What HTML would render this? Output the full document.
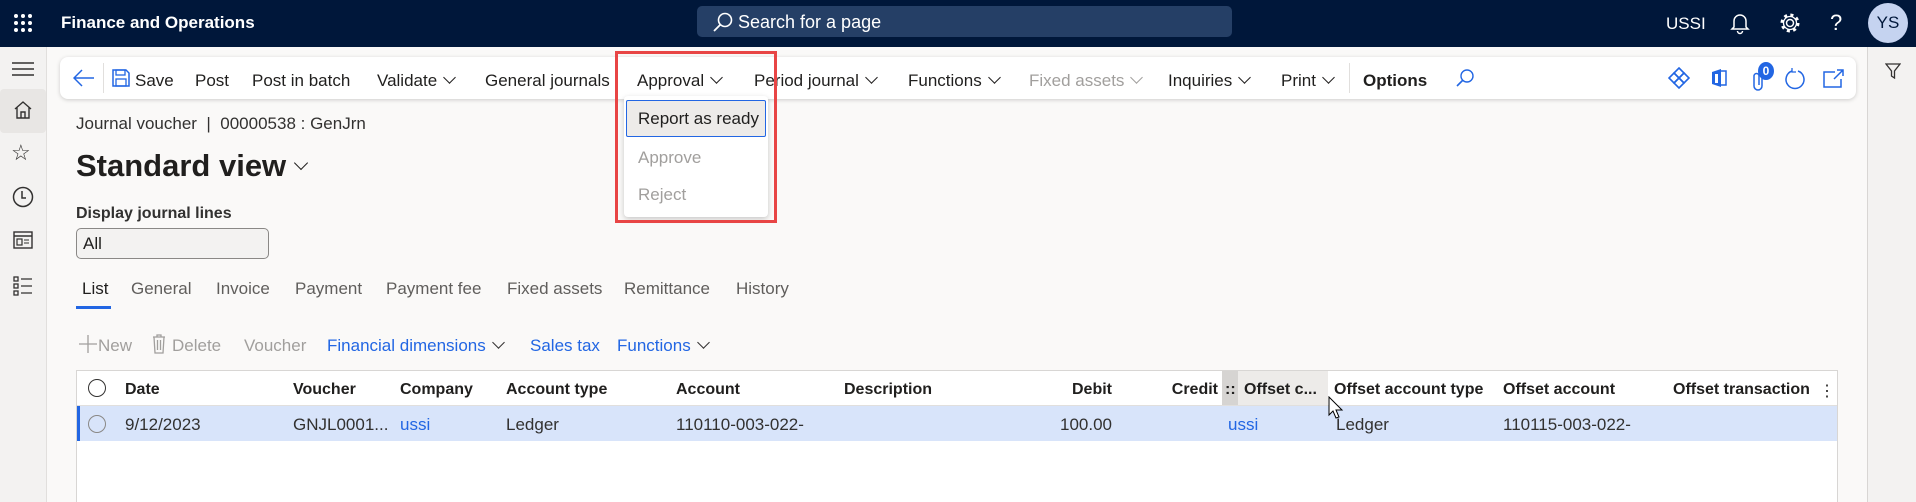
<!DOCTYPE html>
<html style="width:1916px;height:502px;overflow:hidden"><head><meta charset="utf-8"><style>
*{box-sizing:border-box;margin:0;padding:0}
body{width:1916px;height:502px;overflow:hidden;background:#faf9f8;font-family:"Liberation Sans",sans-serif;color:#201f1e;position:relative;font-size:17px}
.a{position:absolute;white-space:nowrap}
.top{position:absolute;left:0;top:0;width:1916px;height:47px;background:#00173a;color:#fff}
.side{position:absolute;left:0;top:47px;width:47px;height:455px;background:#f3f2f1;border-right:1px solid #e1dfdd}
.rside{position:absolute;left:1867px;top:47px;width:49px;height:455px;background:#f3f2f1;border-left:1px solid #d8d6d4}
.tb{position:absolute;left:60px;top:57px;width:1796px;height:42px;background:#fff;border-radius:8px;box-shadow:0 1px 4px rgba(0,0,0,.18)}
.ti{position:absolute;top:71px;font-size:17px;color:#201f1e}
.chev{display:inline-block;width:9px;height:9px;border-right:1.5px solid currentColor;border-bottom:1.5px solid currentColor;transform:rotate(45deg);margin-left:8px;position:relative;top:-4px}
.hd{position:absolute;top:381px;font-size:16px;font-weight:bold;color:#201f1e}
.cd{position:absolute;top:415px;font-size:17px;color:#323130}
.tab{position:absolute;top:279px;font-size:17px;color:#605e5c}
</style></head><body>
<div class="top">
 <svg class="a" style="left:13px;top:13px" width="20" height="20"><g fill="#fff"><circle cx="3" cy="3" r="2"/><circle cx="10" cy="3" r="2"/><circle cx="17" cy="3" r="2"/><circle cx="3" cy="10" r="2"/><circle cx="10" cy="10" r="2"/><circle cx="17" cy="10" r="2"/><circle cx="3" cy="17" r="2"/><circle cx="10" cy="17" r="2"/><circle cx="17" cy="17" r="2"/></g></svg>
 <div class="a" style="left:61px;top:13px;font-size:17px;font-weight:bold">Finance and Operations</div>
 <div class="a" style="left:697px;top:6px;width:535px;height:31px;background:#253f66;border-radius:5px"></div>
 <svg class="a" style="left:712px;top:11px" width="22" height="22"><circle cx="13" cy="9" r="6.5" fill="none" stroke="#fff" stroke-width="1.6"/><line x1="8.5" y1="13.5" x2="2" y2="20" stroke="#fff" stroke-width="1.8"/></svg>
 <div class="a" style="left:738px;top:12px;font-size:18px">Search for a page</div>
 <div class="a" style="left:1666px;top:14px;font-size:17px">USSI</div>
 <svg class="a" style="left:1729px;top:11px" width="22" height="24"><path d="M5 16V10a6 6 0 0 1 12 0v6l2 2H3z" fill="none" stroke="#fff" stroke-width="1.5"/><path d="M8.5 20a2.5 2.5 0 0 0 5 0" fill="none" stroke="#fff" stroke-width="1.5"/></svg>
 <svg class="a" style="left:1778px;top:11px" width="24" height="24"><circle cx="12" cy="12" r="3.5" fill="none" stroke="#fff" stroke-width="1.5"/><circle cx="12" cy="12" r="8" fill="none" stroke="#fff" stroke-width="3" stroke-dasharray="3 3.3"/><circle cx="12" cy="12" r="6.5" fill="none" stroke="#fff" stroke-width="1.3"/></svg>
 <div class="a" style="left:1830px;top:10px;font-size:22px">?</div>
 <div class="a" style="left:1868px;top:3px;width:40px;height:40px;border-radius:50%;background:#c5d3f0;color:#00173a;font-size:17px;text-align:center;line-height:40px">YS</div>
</div>
<div class="side">
 <svg class="a" style="left:12px;top:14px" width="22" height="16"><g stroke="#323130" stroke-width="1.5"><line x1="0" y1="2" x2="22" y2="2"/><line x1="0" y1="8" x2="22" y2="8"/><line x1="0" y1="14" x2="22" y2="14"/></g></svg>
 <div class="a" style="left:0;top:42px;width:46px;height:44px;background:#e8e6e4;border-radius:4px"></div>
 <svg class="a" style="left:13px;top:53px" width="20" height="20"><path d="M2 9L10 2l8 7M4 7v11h12V7M8 18v-6h4v6" fill="none" stroke="#323130" stroke-width="1.4"/></svg>
 <div class="a" style="left:11px;top:93px;font-size:22px;color:#323130">☆</div>
 <svg class="a" style="left:12px;top:139px" width="22" height="22"><circle cx="11" cy="11" r="9.5" fill="none" stroke="#323130" stroke-width="1.5"/><path d="M10 5v7h4" fill="none" stroke="#323130" stroke-width="1.5"/></svg>
 <svg class="a" style="left:13px;top:184px" width="20" height="18"><rect x="1" y="1" width="18" height="16" fill="none" stroke="#323130" stroke-width="1.4"/><line x1="1" y1="5" x2="19" y2="5" stroke="#323130" stroke-width="1.4"/><rect x="4" y="8" width="5" height="6" fill="none" stroke="#323130" stroke-width="1.2"/><path d="M11 9h5M11 12h5" stroke="#323130"/></svg>
 <svg class="a" style="left:13px;top:229px" width="20" height="20"><g fill="none" stroke="#323130" stroke-width="1.3"><rect x="1" y="1" width="4" height="4"/><rect x="1" y="8" width="4" height="4"/><rect x="1" y="15" width="4" height="4"/><path d="M8 3h11M8 10h11M8 17h11"/></g></svg>
</div>
<div class="rside"><svg class="a" style="left:17px;top:16px" width="16" height="16"><path d="M1 1h14L9.5 8v7L6.5 13V8z" fill="none" stroke="#323130" stroke-width="1.3"/></svg></div>

<div class="tb"></div>
<svg class="a" style="left:73px;top:69px" width="22" height="18"><path d="M21 9H2M9 1L1 9l8 8" fill="none" stroke="#2266e3" stroke-width="1.5"/></svg>
<div class="a" style="left:103px;top:63px;width:1px;height:30px;background:#e1dfdd"></div>
<svg class="a" style="left:112px;top:69px" width="18" height="18"><path d="M1 1h13l3 3v13H1z" fill="none" stroke="#2266e3" stroke-width="1.5"/><rect x="4" y="1" width="9" height="5" fill="none" stroke="#2266e3" stroke-width="1.3"/><rect x="4" y="10" width="10" height="7" fill="none" stroke="#2266e3" stroke-width="1.3"/></svg>
<div class="ti" style="left:135px">Save</div>
<div class="ti" style="left:195px">Post</div>
<div class="ti" style="left:252px">Post in batch</div>
<div class="ti" style="left:377px">Validate<span class="chev"></span></div>
<div class="ti" style="left:485px">General journals</div>
<div class="ti" style="left:637px">Approval<span class="chev"></span></div>
<div class="ti" style="left:754px">Period journal<span class="chev"></span></div>
<div class="ti" style="left:908px">Functions<span class="chev"></span></div>
<div class="ti" style="left:1029px;color:#a19f9d">Fixed assets<span class="chev"></span></div>
<div class="ti" style="left:1168px">Inquiries<span class="chev"></span></div>
<div class="ti" style="left:1281px">Print<span class="chev"></span></div>
<div class="a" style="left:1349px;top:63px;width:1px;height:30px;background:#e1dfdd"></div>
<div class="ti" style="left:1363px;font-weight:bold">Options</div>
<svg class="a" style="left:1455px;top:68px" width="20" height="20"><circle cx="12" cy="8" r="6" fill="none" stroke="#2266e3" stroke-width="1.4"/><line x1="8" y1="12" x2="2" y2="18" stroke="#2266e3" stroke-width="1.6"/></svg>
<svg class="a" style="left:1668px;top:67px" width="22" height="22"><g fill="none" stroke="#2266e3" stroke-width="1.6"><path d="M11 1l5 5-5 5-5-5z"/><path d="M6 6l5 5-5 5-5-5z"/><path d="M16 6l5 5-5 5-5-5z"/><path d="M11 11l5 5-5 5-5-5z"/></g></svg>
<svg class="a" style="left:1711px;top:68px" width="16" height="20"><path d="M1 4l9-3v18l-9-3z" fill="#2266e3"/><path d="M10 3h5v14h-5" fill="none" stroke="#2266e3" stroke-width="1.5"/><rect x="4" y="6" width="3" height="9" fill="#fff"/></svg>
<svg class="a" style="left:1752px;top:71px" width="14" height="22"><path d="M10 5v10a4 4 0 0 1-8 0V5a2.5 2.5 0 0 1 5 0v9" fill="none" stroke="#2266e3" stroke-width="1.5"/></svg>
<div class="a" style="left:1758px;top:62px;width:16px;height:18px;border-radius:50%;background:#2266e3;color:#fff;font-size:12px;font-weight:bold;text-align:center;line-height:18px">0</div>
<svg class="a" style="left:1784px;top:68px" width="22" height="22"><path d="M14 3a9 9 0 1 1-6 0" fill="none" stroke="#2266e3" stroke-width="1.5"/><path d="M8 0v4h4" fill="none" stroke="#2266e3" stroke-width="1.3"/></svg>
<svg class="a" style="left:1823px;top:69px" width="22" height="20"><path d="M12 3H1v15h17v-8" fill="none" stroke="#2266e3" stroke-width="1.5"/><path d="M11 10l9-9M14 1h6v6" fill="none" stroke="#2266e3" stroke-width="1.5"/></svg>

<div class="a" style="left:624px;top:96px;width:144px;height:121px;background:#fff;border-radius:4px;box-shadow:0 2px 6px rgba(0,0,0,.2)"></div>
<div class="a" style="left:626px;top:100px;width:140px;height:37px;background:#edebe9;border:1px solid #2266e3;border-radius:2px"></div>
<div class="a" style="left:638px;top:109px;font-size:17px">Report as ready</div>
<div class="a" style="left:638px;top:148px;font-size:17px;color:#a19f9d">Approve</div>
<div class="a" style="left:638px;top:185px;font-size:17px;color:#a19f9d">Reject</div>
<div class="a" style="left:615px;top:51px;width:162px;height:172px;border:3px solid #e84545"></div>

<div class="a" style="left:76px;top:114px;font-size:17px;color:#323130">Journal voucher &nbsp;| &nbsp;00000538 : GenJrn</div>
<div class="a" style="left:76px;top:148px;font-size:31px;font-weight:bold;color:#201f1e">Standard view<span class="chev" style="width:10px;height:10px;margin-left:10px;top:-8px;border-width:1.5px"></span></div>
<div class="a" style="left:76px;top:205px;font-size:16px;font-weight:bold;color:#323130">Display journal lines</div>
<div class="a" style="left:76px;top:228px;width:193px;height:31px;background:#f3f2f1;border:1px solid #8a8886;border-radius:5px;padding:5px 6px;font-size:17px">All</div>

<div class="tab" style="left:82px;color:#201f1e">List</div>
<div class="a" style="left:76px;top:306px;width:35px;height:3px;background:#2266e3"></div>
<div class="tab" style="left:131px">General</div>
<div class="tab" style="left:216px">Invoice</div>
<div class="tab" style="left:295px">Payment</div>
<div class="tab" style="left:386px">Payment fee</div>
<div class="tab" style="left:507px">Fixed assets</div>
<div class="tab" style="left:624px">Remittance</div>
<div class="tab" style="left:736px">History</div>

<svg class="a" style="left:79px;top:335px" width="18" height="18"><path d="M9 0v18M0 9h18" stroke="#a19f9d" stroke-width="1.3"/></svg>
<div class="a" style="left:98px;top:336px;font-size:17px;color:#a19f9d">New</div>
<svg class="a" style="left:152px;top:334px" width="14" height="20"><g fill="none" stroke="#a19f9d" stroke-width="1.3"><path d="M1 3h12M5 3V1h4v2M2 3l1 16h8l1-16M5.5 6v10M8.5 6v10"/></g></svg>
<div class="a" style="left:172px;top:336px;font-size:17px;color:#a19f9d">Delete</div>
<div class="a" style="left:244px;top:336px;font-size:17px;color:#a19f9d">Voucher</div>
<div class="a" style="left:327px;top:336px;font-size:17px;color:#2266e3">Financial dimensions<span class="chev" style="color:#323130"></span></div>
<div class="a" style="left:530px;top:336px;font-size:17px;color:#2266e3">Sales tax</div>
<div class="a" style="left:617px;top:336px;font-size:17px;color:#2266e3">Functions<span class="chev" style="color:#323130"></span></div>

<div class="a" style="left:76px;top:370px;width:1762px;height:132px;background:#fff;border:1px solid #d8d6d4;border-bottom:none"></div>
<div class="a" style="left:1222px;top:371px;width:16px;height:35px;background:#d6d4d2"></div>
<div class="a" style="left:1238px;top:371px;width:90px;height:35px;background:#edebe9"></div>
<div class="a" style="left:77px;top:405px;width:1760px;height:1px;background:#e1dfdd"></div>
<div class="a" style="left:77px;top:406px;width:1760px;height:35px;background:#d8e4fa"></div>
<div class="a" style="left:77px;top:406px;width:3px;height:35px;background:#2266e3"></div>
<div class="a" style="left:88px;top:379px;width:18px;height:18px;border-radius:50%;border:1.5px solid #323130"></div>
<div class="a" style="left:88px;top:415px;width:18px;height:18px;border-radius:50%;border:1.5px solid #8a8886"></div>
<div class="hd" style="left:125px">Date</div>
<div class="hd" style="left:293px">Voucher</div>
<div class="hd" style="left:400px">Company</div>
<div class="hd" style="left:506px">Account type</div>
<div class="hd" style="left:676px">Account</div>
<div class="hd" style="left:844px">Description</div>
<div class="hd" style="left:1060px;width:52px;text-align:right">Debit</div>
<div class="hd" style="left:1160px;width:58px;text-align:right">Credit</div>
<div class="hd" style="left:1225px">::</div>
<div class="hd" style="left:1244px">Offset c...</div>
<div class="hd" style="left:1334px">Offset account type</div>
<div class="hd" style="left:1503px">Offset account</div>
<div class="hd" style="left:1673px">Offset transaction</div>
<div class="hd" style="left:1819px;font-weight:normal">⋮</div>
<div class="cd" style="left:125px">9/12/2023</div>
<div class="cd" style="left:293px">GNJL0001...</div>
<div class="cd" style="left:400px;color:#2266e3">ussi</div>
<div class="cd" style="left:506px">Ledger</div>
<div class="cd" style="left:676px">110110-003-022-</div>
<div class="cd" style="left:1040px;width:72px;text-align:right">100.00</div>
<div class="cd" style="left:1228px;color:#2266e3">ussi</div>
<div class="cd" style="left:1336px">Ledger</div>
<div class="cd" style="left:1503px">110115-003-022-</div>
<svg class="a" style="left:1328px;top:396px" width="16" height="24"><path d="M1 1v18l4-4 3 7 3-1-3-7h6z" fill="#fff" stroke="#000" stroke-width="1"/></svg>
</body></html>
